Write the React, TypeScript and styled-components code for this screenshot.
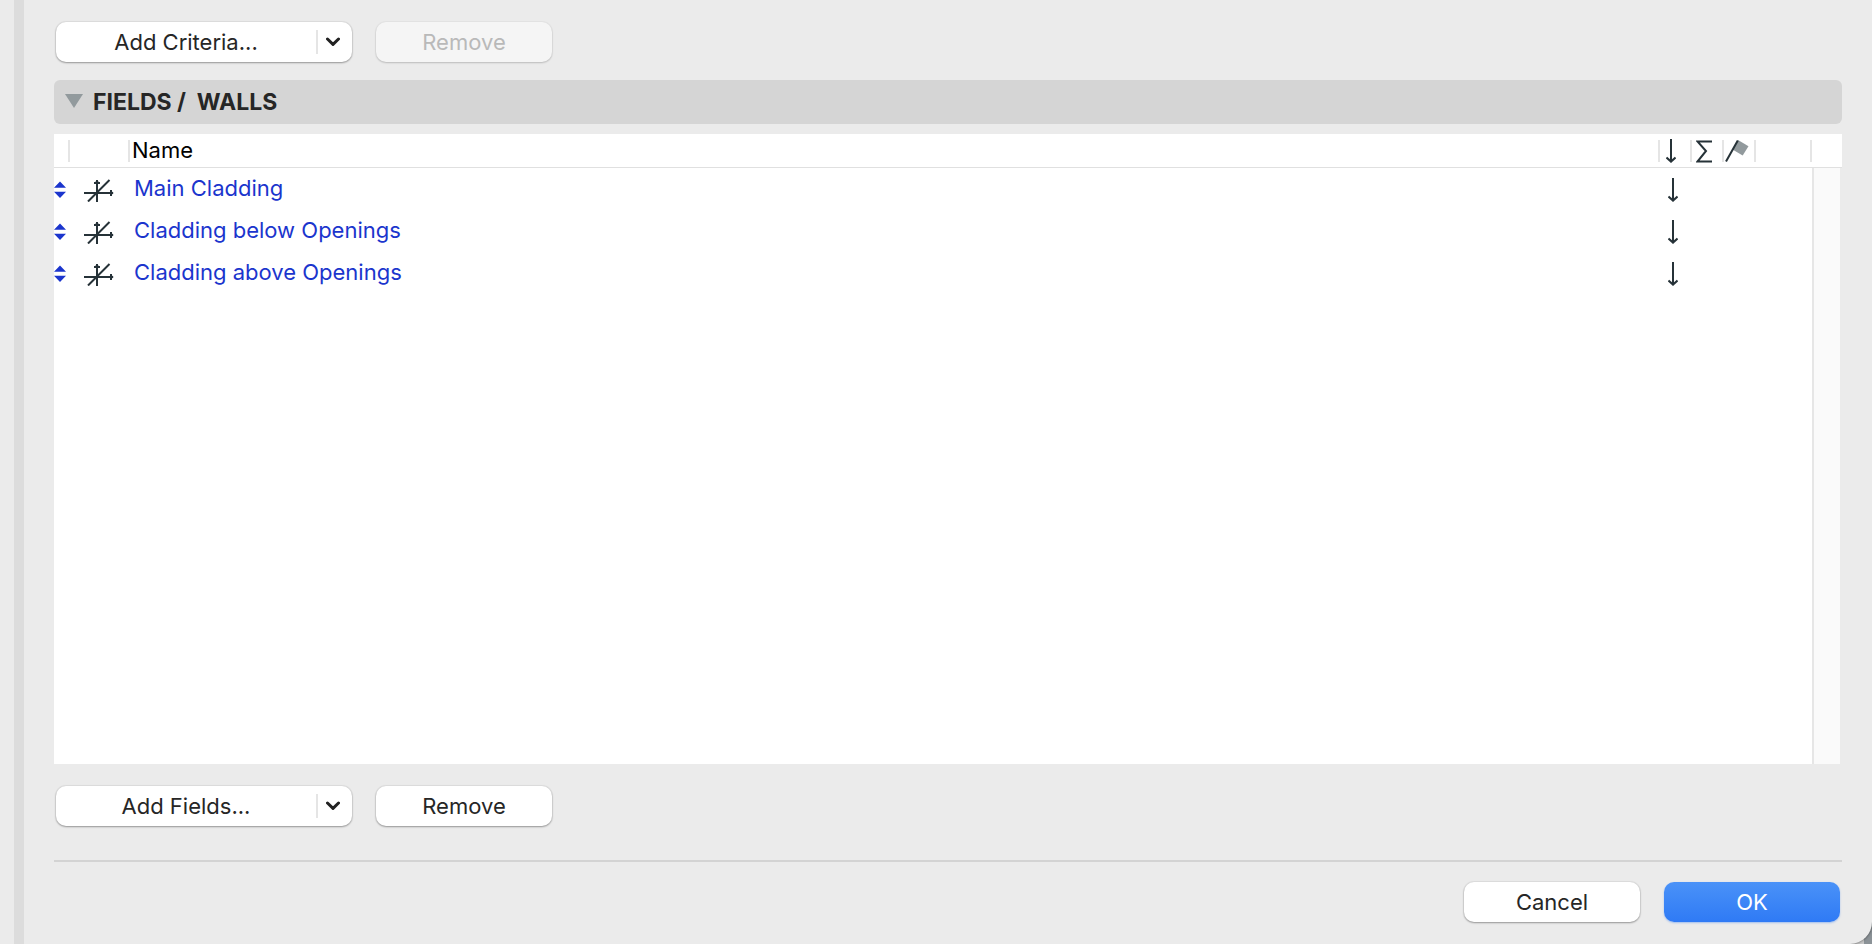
import React from "react";
import styled, { createGlobalStyle } from "styled-components";

const GlobalStyle = createGlobalStyle`
  *, *::before, *::after { box-sizing: border-box; }
  body {
    margin: 0;
    background: linear-gradient(to left, #8b9297 8px, #c9c9c9 8px);
    font-family: Inter, "Liberation Sans", sans-serif;
    font-size: 22px;
    line-height: 28px;
    color: #262626;
  }
  button { font: inherit; color: inherit; }
`;

const Dialog = styled.div`
  display: flex;
  min-height: 100vh;
  background: #ebebeb;
  border-radius: 0 0 22px 0;
  box-shadow: 0 0 3px rgba(0, 0, 0, 0.6);
`;

const Splitter = styled.div`
  flex: none;
  width: 10px;
  margin-left: 14px;
  background: #dcdcdc;
`;

const Main = styled.main`
  flex: 1;
  min-width: 0;
  display: flex;
  flex-direction: column;
  padding: 22px 30px;
`;

const Toolbar = styled.div<{ $end?: boolean }>`
  display: flex;
  justify-content: ${(p) => (p.$end ? "flex-end" : "flex-start")};
  gap: 24px;
  padding: 0 2px;
`;

const surfaceShadow = "0 0 1px 1px rgba(0, 0, 0, 0.06), 0 1px 2px rgba(0, 0, 0, 0.32)";

const PushButton = styled.button<{ $primary?: boolean }>`
  width: 176px;
  height: 40px;
  padding: 0;
  border: 0;
  border-radius: 10px;
  background: ${(p) => (p.$primary ? "linear-gradient(#4a92f8, #2f7af5)" : "#ffffff")};
  color: ${(p) => (p.$primary ? "#ffffff" : "#262626")};
  box-shadow: ${(p) => (p.$primary ? "0 1px 2px rgba(47, 122, 245, 0.4)" : surfaceShadow)};

  &:disabled {
    background: #f5f5f5;
    color: #b9b9b9;
    box-shadow: 0 0 1px 1px rgba(0, 0, 0, 0.03), 0 1px 2px rgba(0, 0, 0, 0.18);
  }
`;

const SplitButtonFrame = styled.div`
  display: flex;
  align-items: center;
  width: 296px;
  height: 40px;
  border-radius: 10px;
  background: #ffffff;
  box-shadow: ${surfaceShadow};
`;

const SplitAction = styled.button`
  flex: 1;
  height: 40px;
  padding: 0;
  border: 0;
  background: none;
`;

const SplitMenu = styled.button`
  display: flex;
  align-items: center;
  width: 36px;
  height: 24px;
  padding: 0 0 0 8px;
  border: 0;
  border-left: 2px solid #e5e5e5;
  background: none;
`;

const SectionHeader = styled.button`
  display: flex;
  align-items: center;
  gap: 10px;
  height: 44px;
  margin-top: 18px;
  padding: 0 11px;
  border: 0;
  border-radius: 6px;
  background: #d5d5d5;
  font-weight: 700;
  font-size: 23px;
  text-align: left;
  white-space: pre;
`;

const ListPanel = styled.div`
  flex: 1;
  display: grid;
  margin: 10px 0 22px;
`;

const FieldTable = styled.table`
  width: 100%;
  height: 100%;
  table-layout: fixed;
  border-collapse: separate;
  border-spacing: 0;
`;

const Column = styled.col<{ $width?: number }>`
  width: ${(p) => (p.$width ? `${p.$width}px` : "auto")};
`;

const HeadCell = styled.th<{ $last?: boolean; $inset?: number }>`
  height: 34px;
  padding: 0 0 0 ${(p) => p.$inset ?? 0}px;
  border-bottom: 1px solid #e0e0e0;
  background: ${(p) =>
    p.$last ? "#ffffff" : "linear-gradient(#e5e5e5, #e5e5e5) right 6px / 2px 22px no-repeat #ffffff"};
  color: #000000;
  font-weight: 400;
  text-align: left;

  svg { display: block; }
`;

const NameHead = styled(HeadCell)`
  padding-bottom: 2px;
`;

const Cell = styled.td<{ $inset?: number }>`
  height: 42px;
  padding: 0 0 0 ${(p) => p.$inset ?? 0}px;
  background: #ffffff;
  color: #1b35cd;

  svg { display: block; }
`;

const NameCell = styled(Cell)`
  padding-bottom: 3px;
`;

const SortCell = styled(Cell)`
  padding-top: 2px;
`;

const FillerCell = styled.td`
  padding: 0;
  background: #ffffff;
`;

const ScrollTrack = styled.td`
  padding: 0;
  border-left: 2px solid #e6e6e6;
  border-right: 2px solid #ebebeb;
  background: #fafafa;
`;

const OrderHandle = styled.button`
  display: block;
  padding: 0;
  border: 0;
  background: none;
`;

const Divider = styled.hr`
  width: 100%;
  height: 2px;
  margin: 34px 0 20px;
  border: 0;
  background: #d3d3d3;
`;

const INK = "#263238";

const ChevronIcon = () => (
  <svg width="14" height="10" viewBox="0 0 14 10" fill="none" aria-hidden="true">
    <path d="M1.5 2 7 7.3 12.5 2" stroke="#222" strokeWidth="3" strokeLinecap="round" strokeLinejoin="round" />
  </svg>
);

const DisclosureIcon = () => (
  <svg width="18" height="18" viewBox="0 0 18 18" aria-hidden="true">
    <path d="M0 1H18L9 15Z" fill="#929a9d" />
  </svg>
);

const OrderIcon = () => (
  <svg width="12" height="20" viewBox="0 0 12 20" aria-hidden="true">
    <path d="M6 2.5 12 8.7H0ZM0 12.7H12L6 19Z" fill="#1b35cd" />
  </svg>
);

const AxesIcon = () => (
  <svg width="30" height="26" viewBox="0 0 30 26" fill="none" stroke={INK} aria-hidden="true">
    <path d="M0 17H29M13 4V26" strokeWidth="2" />
    <path d="M4 25.5 25.5 4" strokeWidth="2" />
    <path d="M10 7H16M27 14V20" strokeWidth="2" />
    <path d="M11 7 13 4.5 15 7M27 15 29.2 17 27 19" strokeWidth="1" />
  </svg>
);

const DownArrowIcon = () => (
  <svg width="10" height="24" viewBox="0 0 10 24" fill="none" stroke={INK} aria-hidden="true">
    <path d="M5 0V23" strokeWidth="2" />
    <path d="M.5 18.5 5 22.6 9.5 18.5" strokeWidth="2" />
  </svg>
);

const SumIcon = () => (
  <svg width="16" height="24" viewBox="0 0 16 24" fill="none" stroke={INK} aria-hidden="true">
    <path d="M16 2.5H1.5L10 12 1.5 22.5H16" strokeWidth="2" />
  </svg>
);

const FlagIcon = () => (
  <svg width="24" height="24" viewBox="0 0 24 24" aria-hidden="true">
    <path d="M13 1 23.5 7.2 17.7 16.5 7.5 10.5Z" fill="#929a9d" />
    <path d="M1 22.5 12.8 1.5" stroke={INK} strokeWidth="2" />
  </svg>
);

const SplitButton = ({ label, menuLabel }: { label: string; menuLabel: string }) => (
  <SplitButtonFrame>
    <SplitAction type="button">{label}</SplitAction>
    <SplitMenu type="button" aria-label={menuLabel}>
      <ChevronIcon />
    </SplitMenu>
  </SplitButtonFrame>
);

const fields = ["Main Cladding", "Cladding below Openings", "Cladding above Openings"];

export default function App() {
  return (
    <>
      <GlobalStyle />
      <Dialog>
        <Splitter />
        <Main>
          <Toolbar>
            <SplitButton label="Add Criteria..." menuLabel="Criteria menu" />
            <PushButton type="button" disabled>Remove</PushButton>
          </Toolbar>

          <SectionHeader type="button" aria-expanded="true">
            <DisclosureIcon />
            <span>{"FIELDS /  WALLS"}</span>
          </SectionHeader>

          <ListPanel>
            <FieldTable>
              <colgroup>
                <Column $width={16} />
                <Column $width={60} />
                <Column />
                <Column $width={32} />
                <Column $width={32} />
                <Column $width={32} />
                <Column $width={56} />
                <Column $width={30} />
              </colgroup>
              <thead>
                <tr>
                  <HeadCell aria-label="Order" />
                  <HeadCell aria-label="Type" />
                  <NameHead $inset={2}>Name</NameHead>
                  <HeadCell aria-label="Sort" $inset={6}><DownArrowIcon /></HeadCell>
                  <HeadCell aria-label="Sum" $inset={4}><SumIcon /></HeadCell>
                  <HeadCell aria-label="Flag" $inset={1}><FlagIcon /></HeadCell>
                  <HeadCell aria-label="Unit" />
                  <HeadCell $last aria-label="Scroll" />
                </tr>
              </thead>
              <tbody>
                {fields.map((name, index) => (
                  <tr key={name}>
                    <Cell>
                      <OrderHandle type="button" aria-label={`Reorder ${name}`}>
                        <OrderIcon />
                      </OrderHandle>
                    </Cell>
                    <Cell $inset={14}><AxesIcon /></Cell>
                    <NameCell $inset={4}>{name}</NameCell>
                    <SortCell $inset={8}><DownArrowIcon /></SortCell>
                    <Cell />
                    <Cell />
                    <Cell />
                    {index === 0 && <ScrollTrack rowSpan={fields.length + 1} />}
                  </tr>
                ))}
                <tr>
                  <FillerCell colSpan={7} />
                </tr>
              </tbody>
            </FieldTable>
          </ListPanel>

          <Toolbar>
            <SplitButton label="Add Fields..." menuLabel="Fields menu" />
            <PushButton type="button">Remove</PushButton>
          </Toolbar>

          <Divider />

          <Toolbar $end>
            <PushButton type="button">Cancel</PushButton>
            <PushButton type="button" $primary>OK</PushButton>
          </Toolbar>
        </Main>
      </Dialog>
    </>
  );
}
